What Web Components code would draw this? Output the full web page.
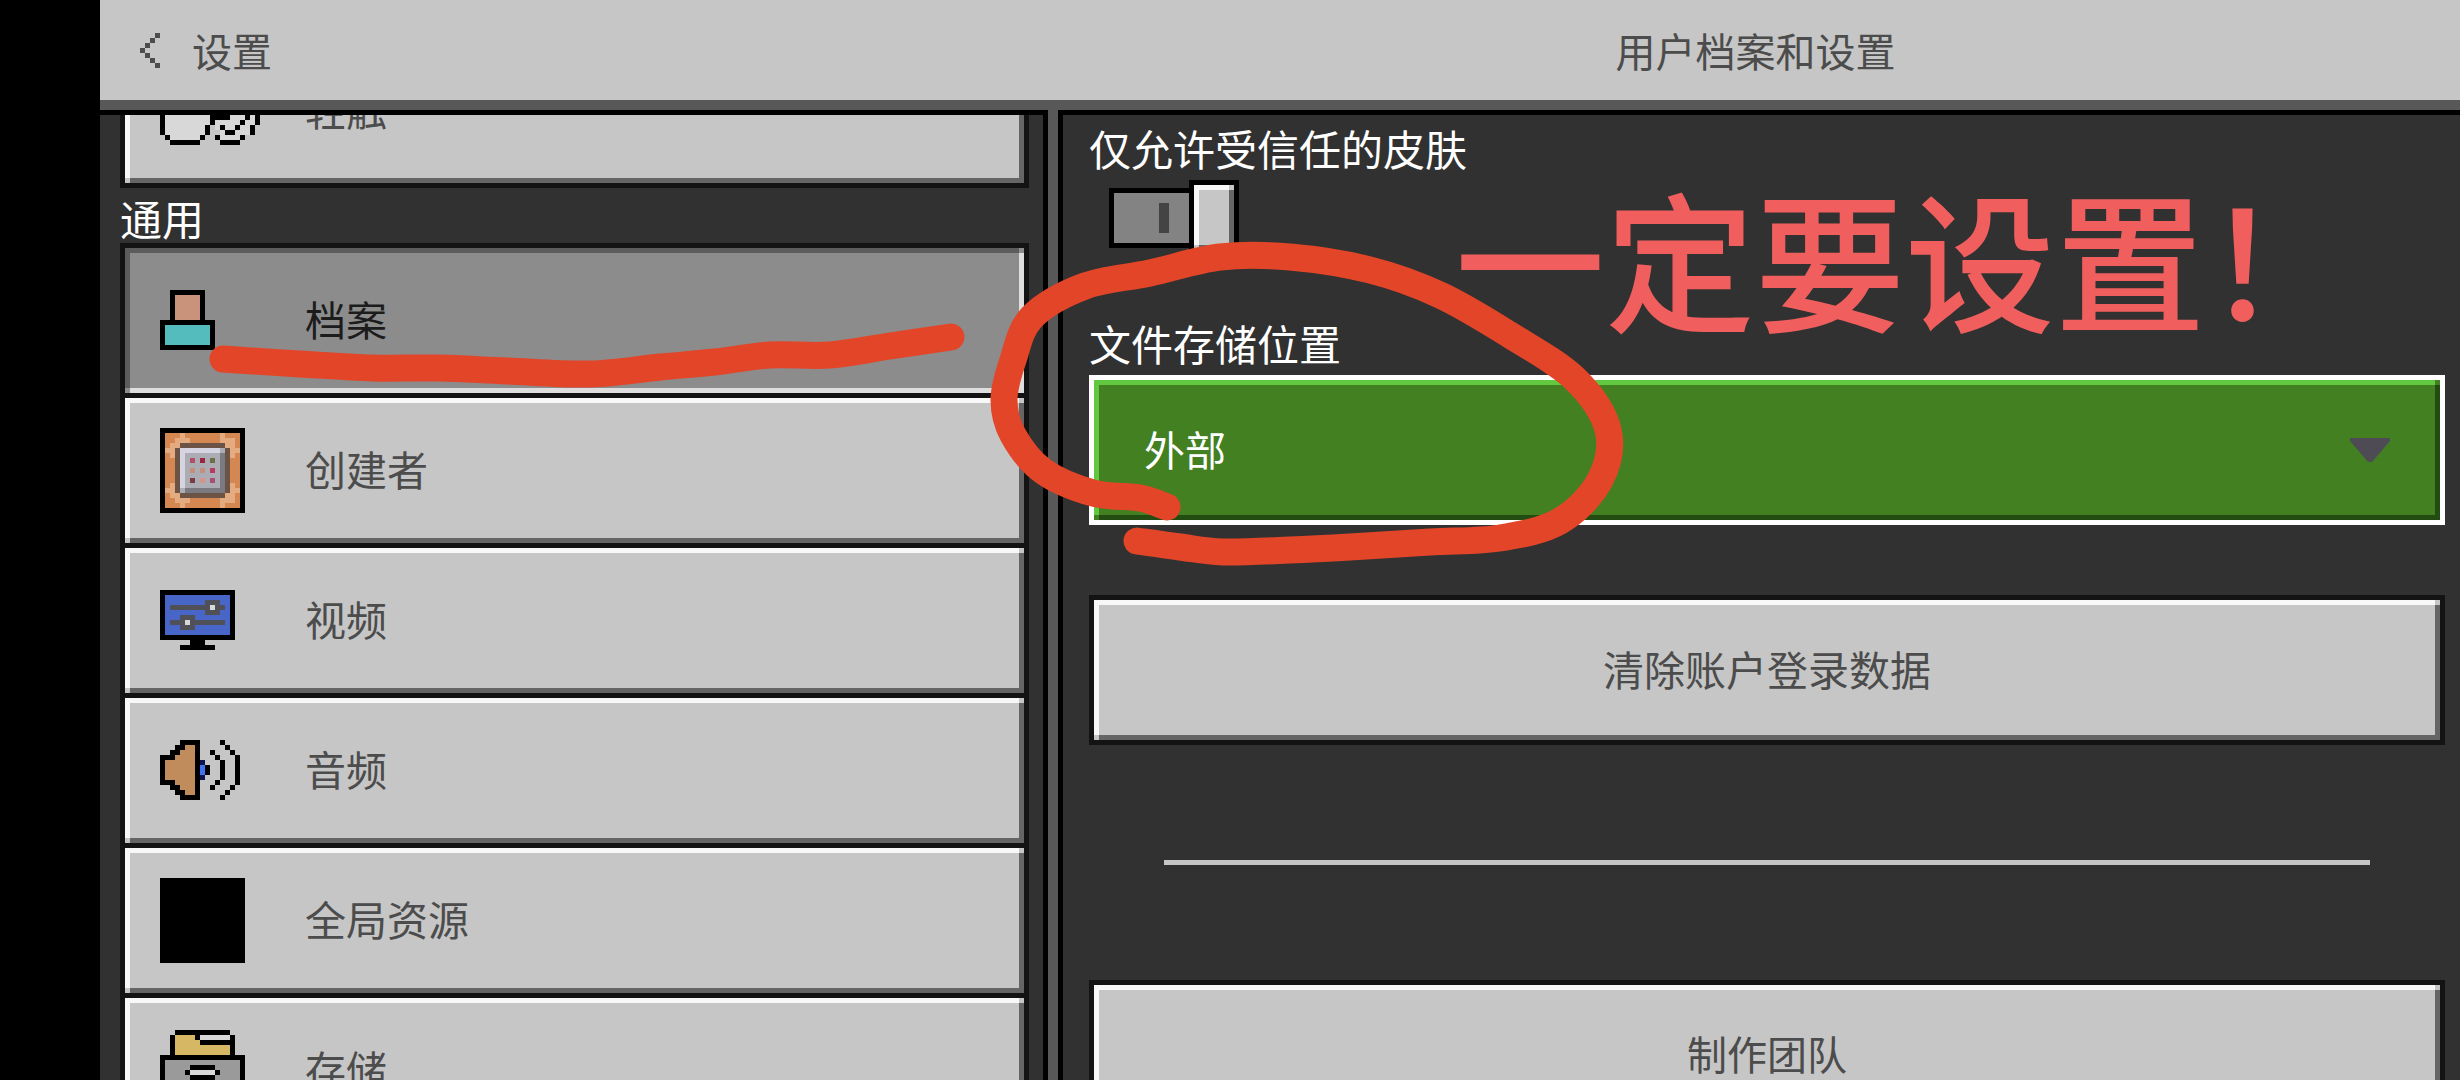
<!DOCTYPE html>
<html lang="zh-CN">
<head>
<meta charset="utf-8">
<title>设置</title>
<style>
    body{
        margin: 0;
        background-color: #000;
        font-family: "Noto Sans CJK SC", "Noto Sans", sans-serif;
        font-size: 42px;
        line-height: 50px;
        color: #4c4c4c;
    }
</style>
</head>
<body>

<settings-screen>
    <screen-header slot="header" back="设置" heading="用户档案和设置"></screen-header>

    <settings-list slot="list" offset="82">
        <list-item icon="touch">轻触</list-item>
        <list-group>通用</list-group>
        <list-item icon="profile" selected>档案</list-item>
        <list-item icon="creator">创建者</list-item>
        <list-item icon="video">视频</list-item>
        <list-item icon="audio">音频</list-item>
        <list-item icon="global">全局资源</list-item>
        <list-item icon="storage">存储</list-item>
    </settings-list>

    <settings-detail slot="detail">
        <setting-toggle label="仅允许受信任的皮肤"></setting-toggle>
        <setting-select label="文件存储位置" options="外部,应用程序"></setting-select>
        <action-button>清除账户登录数据</action-button>
        <section-line></section-line>
        <action-button class="small">制作团队</action-button>
    </settings-detail>

    <marker-note slot="notes">一定要设置！</marker-note>
</settings-screen>

<script>
//estilos compartidos: borde biselado de los botones
const bevel=`
    .bevel{
        --face: #c6c6c6;
        --light: #f8f8f8;
        --dark: #656565;
        --edge: #131313;
        --corner: #c6c6c6;
        box-sizing: border-box;
        margin: 0;
        border: 5px solid var(--edge);
        border-radius: 0;
        outline: none;
        font: inherit;
        color: inherit;
        background:
            linear-gradient(var(--corner), var(--corner)) right top / 5px 5px no-repeat,
            linear-gradient(var(--corner), var(--corner)) left bottom / 5px 5px no-repeat,
            linear-gradient(var(--light), var(--light)) left top / 100% 5px no-repeat,
            linear-gradient(var(--light), var(--light)) left top / 5px 100% no-repeat,
            linear-gradient(var(--dark), var(--dark)) right top / 5px 100% no-repeat,
            linear-gradient(var(--dark), var(--dark)) left bottom / 100% 5px no-repeat,
            var(--face);
        background-origin: padding-box;
        background-clip: padding-box;
    }`

//cada letra es un color
const palette={
    k:"#000", p:"#c8937a", t:"#54bcbc", o:"#d58751", l:"#e5ab80", d:"#6b5446",
    w:"#d6d4e0", g:"#acacb4", s:"#7a7a80", b:"#4865c8", n:"#4f5058", a:"#c08c5c",
    v:"#0c1450", u:"#4272f0", y:"#d6b764", e:"#d8d8d8", m:"#9a9a9a", c:"#4c4c4c",
    1:"#b05068", 2:"#9c2440", 3:"#6b7046", 4:"#c4907a", 5:"#b83a5c", 6:"#7e3a44",
    7:"#d8948c", 8:"#a85070"
}

const icons={
    back:["...c","..c.",".c..","c...",".c..","..c.","...c"],
    touch:[
        "..kkkkkk............",
        ".keeeeeek...........",
        "keeeeeeeek..........",
        "keeeeeeeek..........",
        "keeeeeeeek....kkkk..",
        "keeeeeeeek...keeeek.",
        "keeeeeeeeekkkeeeeeek",
        "keeeeeeeeekkkkeeeeek",
        "keeeeeeeeekkkkeeekek",
        "keeeeeeeeekeeeeekeek",
        "keeeeeeeek.ekeekeek.",
        "keeeeeeeek..ekkeeek.",
        ".keeeeeek..keeeek...",
        "..kkkkkk....kkkk...."],
    profile:[
        "..kkkkkkk..",
        "..kpppppk..",
        "..kpppppk..",
        "..kpppppk..",
        "..kpppppk..",
        "..kpppppk..",
        "kkkkkkkkkkk",
        "ktttttttttk",
        "ktttttttttk",
        "ktttttttttk",
        "ktttttttttk",
        "kkkkkkkkkkk"],
    creator:[
        "kkkkkkkkkkkkkkkkk",
        "koooloooooooloook",
        "koollloooooolllok",
        "kolldddddddddllok",
        "klldwwwwwwwwgdllk",
        "koldwgggggggsdlok",
        "koodwg1g2g3gsdook",
        "koodwgggggggsdook",
        "koodwg4g4g5gsdook",
        "koodwgggggggsdook",
        "koodwg6g7g8gsdook",
        "koldwgggggggsdlok",
        "klldgssssssssdllk",
        "kolldddddddddllok",
        "koollloooooolllok",
        "koooloooooooloook",
        "kkkkkkkkkkkkkkkkk"],
    video:[
        "kkkkkkkkkkkkkkk",
        "kbbbbbbbbbbbbbk",
        "kbbbbbbbbnnnbbk",
        "kbnnnnnnnnennbk",
        "kbbbbbbbbnnnbbk",
        "kbbbnnnbbbbbbbk",
        "kbnnnennnnnnnbk",
        "kbbbnnnbbbbbbbk",
        "kbbbbbbbbbbbbbk",
        "kkkkkkkkkkkkkkk",
        "......kkk......",
        "....kkkkkkk...."],
    audio:[
        "....kkkk....k...",
        "...kkaak.....k..",
        "..kkaaak..k...k.",
        "kkkaaaak...k...k",
        "kaaaaaakv...k..k",
        "kaaaaaakuk..k..k",
        "kaaaaaakuk..k..k",
        "kaaaaaakv...k..k",
        "kkkaaaak...k...k",
        "..kkaaak..k...k.",
        "...kkaak.....k..",
        "....kkkk....k..."],
    global:Array(17).fill("k".repeat(17)),
    storage:[
        "...kkkkkkkkkkk...",
        "..kyyyykeeeeeek..",
        "..kyyyyykkkkkkk..",
        "..kyyyyyyyyyyyk..",
        "..kyyyyyyyyyyyk..",
        "kkkkkkkkkkkkkkkkk",
        "kmmmmmmmmmmmmmmmk",
        "kmmmmmkkkkkmmmmmk",
        "kmmmmkeeeeekmmmmk",
        "kmmmmmkkkkkmmmmmk",
        "kmmmmmmmmmmmmmmmk",
        "kkkkkkkkkkkkkkkkk",
        "kmmmmmkkkkkmmmmmk",
        "kmmmmkeeeeekmmmmk",
        "kmmmmmmmmmmmmmmmk",
        "kkkkkkkkkkkkkkkkk"]
}

class pixelIcon extends HTMLElement{
    constructor(){
        super()
        this.attachShadow({mode: "open"})
    }
    connectedCallback(){
        const rows=icons[this.getAttribute("name")]
        const cols=rows[0].length
        let rects=""
        rows.forEach((row,y)=>{
            for(const run of row.matchAll(/([^.])\1*/g)){
                rects+=`<rect x="${run.index}" y="${y}" width="${run[0].length}" height="1" fill="${palette[run[1]]}"/>`
            }
        })
        this.shadowRoot.innerHTML=
        `<style>
            :host{ display: block; flex: none; }
            svg{ display: block; shape-rendering: crispEdges; }
        </style>
        <svg width="${cols*5}" height="${rows.length*5}" viewBox="0 0 ${cols} ${rows.length}" aria-hidden="true">${rects}</svg>`
    }
}
customElements.define("pixel-icon",pixelIcon)

class screenHeader extends HTMLElement{
    constructor(){
        super()
        this.attachShadow({mode: "open"})
    }
    connectedCallback(){
        this.shadowRoot.innerHTML=
        `<style>
            :host{
                display: grid;
                grid-template-columns: 27fr 40fr;
                align-items: center;
                height: 100px;
                background-color: #c6c6c6;
                border-bottom: 10px solid #585858;
                font-size: 40px;
            }
            button{
                display: flex;
                align-items: center;
                gap: 32px;
                justify-self: start;
                height: 100px;
                padding: 0 40px;
                border: none;
                background: none;
                font: inherit;
                color: inherit;
            }
            h1{
                margin: 0;
                font: inherit;
                text-align: center;
            }
        </style>
        <button type="button"><pixel-icon name="back"></pixel-icon><span>${this.getAttribute("back")}</span></button>
        <h1>${this.getAttribute("heading")}</h1>`
    }
}
customElements.define("screen-header",screenHeader)

class listItem extends HTMLElement{
    constructor(){
        super()
        this.attachShadow({mode: "open"})
    }
    connectedCallback(){
        const current=this.hasAttribute("selected") ? `aria-current="page"` : ""
        this.shadowRoot.innerHTML=
        `<style>
            ${bevel}
            :host{
                display: block;
                font-size: 41px;
            }
            button{
                display: flex;
                align-items: center;
                gap: 60px;
                width: 100%;
                height: 155px;
                padding: 0 35px 1px;
                text-align: left;
            }
            .icon{
                flex: none;
                width: 85px;
            }
            .text{ padding-bottom: 5px; }
            :host([selected]) .bevel{
                --face: #8c8c8c;
                --light: #5c5c5c;
                --dark: #dedede;
                --corner: #8c8c8c;
                color: #1c1c1c;
            }
        </style>
        <button type="button" class="bevel" ${current}>
            <span class="icon"><pixel-icon name="${this.getAttribute("icon")}"></pixel-icon></span>
            <span class="text"><slot></slot></span>
        </button>`
    }
}
customElements.define("list-item",listItem)

class listGroup extends HTMLElement{
    constructor(){
        super()
        this.attachShadow({mode: "open"})
    }
    connectedCallback(){
        this.shadowRoot.innerHTML=
        `<style>
            :host{
                display: block;
                padding-top: 5px;
                color: #fff;
            }
            h2{
                margin: 0;
                font: inherit;
            }
        </style>
        <h2><slot></slot></h2>`
    }
}
customElements.define("list-group",listGroup)

class settingsList extends HTMLElement{
    constructor(){
        super()
        this.attachShadow({mode: "open"})
    }
    connectedCallback(){
        this.shadowRoot.innerHTML=
        `<style>
            :host{
                display: block;
                min-height: 0;
                overflow-y: auto;
                scrollbar-width: none;
                background-color: #313131;
                border-top: 5px solid #000;
            }
            nav{
                display: flex;
                flex-direction: column;
                padding: 0 14px 0 20px;
            }
        </style>
        <nav><slot></slot></nav>`
        //los botones tras otro botón suben 5px para compartir el borde
        const items=[...this.children]
        items.forEach((item,i)=>{
            if(i>0 && item.localName==="list-item" && items[i-1].localName==="list-item"){
                item.style.marginTop="-5px"
            }
        })
        this.scrollTop=Number(this.getAttribute("offset"))
    }
}

class settingToggle extends HTMLElement{
    constructor(){
        super()
        this.attachShadow({mode: "open"})
    }
    connectedCallback(){
        this.shadowRoot.innerHTML=
        `<style>
            ${bevel}
            :host{
                display: flex;
                flex-direction: column;
                gap: 7px;
                color: #fff;
            }
            .switch{
                display: grid;
                grid-template-columns: 80px 50px;
                align-items: center;
                height: 75px;
                margin-left: 20px;
                width: 130px;
            }
            .switch > *{ grid-row: 1; }
            .track{
                grid-column: 1;
                display: flex;
                align-items: center;
                justify-content: flex-end;
                box-sizing: border-box;
                height: 60px;
                padding-right: 20px;
                border: 5px solid #000;
                border-right: none;
                background-color: #838383;
            }
            .track i{
                width: 10px;
                height: 30px;
                background-color: #444;
            }
            .knob.bevel{
                grid-column: 2;
                height: 75px;
                --edge: #000;
            }
            input{
                grid-column: 1 / 3;
                width: 100%;
                height: 100%;
                margin: 0;
                opacity: 0;
            }
        </style>
        <label for="check">${this.getAttribute("label")}</label>
        <div class="switch">
            <span class="track"><i></i></span>
            <span class="knob bevel"></span>
            <input id="check" type="checkbox" role="switch" checked>
        </div>`
    }
}
customElements.define("setting-toggle",settingToggle)

class settingSelect extends HTMLElement{
    constructor(){
        super()
        this.attachShadow({mode: "open"})
    }
    connectedCallback(){
        const options=this.getAttribute("options").split(",")
        this.shadowRoot.innerHTML=
        `<style>
            ${bevel}
            :host{
                display: flex;
                flex-direction: column;
                gap: 7px;
                color: #fff;
            }
            .field{ display: grid; }
            .field > *{ grid-area: 1 / 1; }
            select.bevel{
                appearance: none;
                width: 100%;
                height: 150px;
                padding: 0 100px 4px 50px;
                font-size: 41px;
                --face: #428022;
                --light: #62c840;
                --dark: #224c12;
                --corner: #428022;
                --edge: #fff;
            }
            option{ color: #4c4c4c; }
            svg{
                align-self: center;
                justify-self: end;
                margin-right: 55px;
                pointer-events: none;
            }
        </style>
        <label for="choice">${this.getAttribute("label")}</label>
        <div class="field">
            <select id="choice" class="bevel">${options.map(o=>`<option>${o}</option>`).join("")}</select>
            <svg width="40" height="24" viewBox="0 0 40 24" aria-hidden="true"><path d="M0 0h40v3L22 24h-4L0 3z" fill="#4f4b54"/></svg>
        </div>`
    }
}
customElements.define("setting-select",settingSelect)

class actionButton extends HTMLElement{
    constructor(){
        super()
        this.attachShadow({mode: "open"})
    }
    connectedCallback(){
        this.shadowRoot.innerHTML=
        `<style>
            ${bevel}
            :host{
                display: block;
                font-size: 41px;
            }
            :host(.small){ font-size: 40px; }
            button{
                width: 100%;
                height: 150px;
                padding: 0 0 4px;
            }
        </style>
        <button type="button" class="bevel"><slot></slot></button>`
    }
}
customElements.define("action-button",actionButton)

class sectionLine extends HTMLElement{
    constructor(){
        super()
        this.attachShadow({mode: "open"})
    }
    connectedCallback(){
        this.shadowRoot.innerHTML=
        `<style>
            :host{ display: block; padding: 0 75px; }
            hr{
                height: 5px;
                margin: 0;
                border: none;
                background-color: #c6c6c6;
            }
        </style>
        <hr>`
    }
}
customElements.define("section-line",sectionLine)

class settingsDetail extends HTMLElement{
    constructor(){
        super()
        this.attachShadow({mode: "open"})
    }
    connectedCallback(){
        this.shadowRoot.innerHTML=
        `<style>
            :host{
                display: block;
                min-height: 0;
                overflow-y: auto;
                scrollbar-width: none;
                background-color: #313131;
                border-top: 5px solid #000;
            }
            section{
                display: flex;
                flex-direction: column;
                padding: 8px 15px 20px 26px;
            }
            ::slotted(setting-select){ margin-top: 63px; }
            ::slotted(action-button){ margin-top: 70px; }
            ::slotted(section-line){ margin: 115px 0 45px; }
        </style>
        <section><slot></slot></section>`
    }
}
customElements.define("settings-detail",settingsDetail)

//trazos de rotulador por encima de la pantalla
const strokes=[
    [[223,359],[300,364],[373,368],[440,368],[507,371],[590,374],[660,367],[715,362],[770,355],[830,355],[890,346],[951,337]],
    [[1167,507],[1140,498],[1093,493],[1043,471],[1013,435],[1004,400],[1013,360],[1032,317],[1085,286],[1150,273],[1220,257],[1290,257],[1370,270],[1440,295],[1510,335],[1575,379],[1608,430],[1600,480],[1560,521],[1500,538],[1430,542],[1350,547],[1290,550],[1223,552],[1180,547],[1137,541]]
]

//curva suave que pasa por todos los puntos
function smooth(points){
    let d=`M${points[0]}`
    for(let i=0;i<points.length-1;i++){
        const a=points[i-1]||points[i]
        const b=points[i]
        const c=points[i+1]
        const e=points[i+2]||c
        d+=`C${b[0]+(c[0]-a[0])/6} ${b[1]+(c[1]-a[1])/6} ${c[0]-(e[0]-b[0])/6} ${c[1]-(e[1]-b[1])/6} ${c}`
    }
    return d
}

class markerNote extends HTMLElement{
    constructor(){
        super()
        this.attachShadow({mode: "open"})
    }
    connectedCallback(){
        this.shadowRoot.innerHTML=
        `<style>
            :host{
                position: absolute;
                inset: 0;
                overflow: hidden;
                pointer-events: none;
            }
            svg{
                display: block;
                width: 100%;
            }
            p{
                position: absolute;
                left: 1455px;
                top: 181px;
                margin: 0;
                font-size: 150px;
                line-height: 150px;
                font-weight: 500;
                white-space: nowrap;
                color: #f05e5e;
            }
        </style>
        <svg viewBox="0 0 2460 1080" fill="none" stroke="#e34528" stroke-width="27" stroke-linecap="round" stroke-linejoin="round" aria-hidden="true">
            ${strokes.map(s=>`<path d="${smooth(s)}"/>`).join("")}
        </svg>
        <p><slot></slot></p>`
    }
}
customElements.define("marker-note",markerNote)

class settingsScreen extends HTMLElement{
    constructor(){
        super()
        this.attachShadow({mode: "open"})
    }
    connectedCallback(){
        this.shadowRoot.innerHTML=
        `<style>
            :host{
                position: relative;
                display: flex;
                flex-direction: column;
                box-sizing: border-box;
                height: 100vh;
                padding-left: 100px;
                overflow: hidden;
            }
            main{
                flex: 1;
                min-height: 0;
                display: grid;
                grid-template-columns: 27fr 20px 40fr;
                grid-template-rows: minmax(0, 1fr);
            }
            .divider{
                border: solid #000;
                border-width: 0 5px;
                background-color: #585858;
            }
        </style>
        <slot name="header"></slot>
        <main>
            <slot name="list"></slot>
            <div class="divider"></div>
            <slot name="detail"></slot>
        </main>
        <slot name="notes"></slot>`
    }
}
customElements.define("settings-screen",settingsScreen)
//la lista va al final: necesita el alto de la pantalla para desplazarse
customElements.define("settings-list",settingsList)
</script>
</body>
</html>
